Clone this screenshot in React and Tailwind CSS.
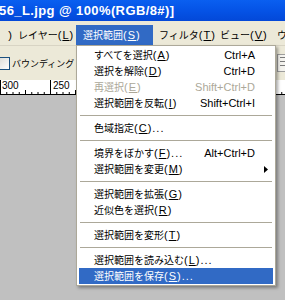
const jp = "font-['Noto_Sans_CJK_JP','Noto_Sans_CJK_SC',sans-serif]"
const lat = "font-['Liberation_Sans','Noto_Sans_CJK_JP',sans-serif]"

/* ---------------- Data ---------------- */
const rows = [
  { t: "すべてを選択", k: "A", sc: "Ctrl+A" },
  { t: "選択を解除", k: "D", sc: "Ctrl+D" },
  { t: "再選択", k: "E", sc: "Shift+Ctrl+D", off: true },
  { t: "選択範囲を反転", k: "I", sc: "Shift+Ctrl+I" },
  "sep",
  { t: "色域指定", k: "C", dots: true },
  "sep",
  { t: "境界をぼかす", k: "F", dots: true, sc: "Alt+Ctrl+D" },
  { t: "選択範囲を変更", k: "M", sub: true },
  "sep",
  { t: "選択範囲を拡張", k: "G" },
  { t: "近似色を選択", k: "R" },
  "sep",
  { t: "選択範囲を変形", k: "T" },
  "sep",
  { t: "選択範囲を読み込む", k: "L", dots: true },
  { t: "選択範囲を保存", k: "S", dots: true, on: true },
]

function Label({ t, k, dots }) {
  return (
    <span className="flex items-baseline whitespace-nowrap leading-none">
      <span className={jp + " text-[10px] leading-none"}>{t}</span>
      <span className={lat + " text-[11px] leading-none tracking-[1px]"}>
        (<span className="underline underline-offset-[1px]">{k}</span>)
        {dots ? "..." : ""}
      </span>
    </span>
  )
}

/* ---------------- Ruler ---------------- */
function Ruler() {
  const ticks = []
  for (let i = 0; i <= 48; i++) {
    const x = i * 6.25 + 0.5
    const h = i % 8 === 0 ? 15 : i % 4 === 0 ? 5 : 3
    ticks.push(<line key={i} x1={x} x2={x} y1={15 - h} y2={15} stroke="#000" strokeWidth="1" />)
  }
  return (
    <svg width="285" height="15" className="block shrink-0">
      <rect width="285" height="15" fill="#fff" />
      {ticks}
      <line x1="0" x2="285" y1="14.5" y2="14.5" stroke="#000" />
      <text x="2" y="9" fontSize="10" fontFamily="Liberation Sans" fill="#000">300</text>
      <text x="53" y="9" fontSize="10" fontFamily="Liberation Sans" fill="#000">250</text>
    </svg>
  )
}

/* ---------------- App ---------------- */
export default function App() {
  return (
    <div className="relative w-[285px] h-[300px] overflow-hidden bg-[#c0c0c0] flex flex-col">
      {/* Title bar */}
      <div className="h-[21px] shrink-0 bg-gradient-to-b from-[#0a5ff0] via-[#0553e6] to-[#0348d8] flex items-center">
        <span className={lat + " text-white font-bold text-[13px] leading-none tracking-[0.4px] whitespace-nowrap -ml-[1px]"}>
          56_L.jpg @ 100%(RGB/8#)]
        </span>
      </div>

      {/* Menu bar */}
      <div className="h-[24px] shrink-0 bg-[#ece9d8] flex items-end text-black overflow-hidden">
        <div className="w-[12px] shrink-0 h-[20px] flex items-center justify-end overflow-hidden">
          <span className={lat + " text-[11px] leading-none"}>)</span>
        </div>
        <div className="w-[64px] shrink-0 h-[20px] flex items-center pl-[6px]">
          <Label t="レイヤー" k="L" />
        </div>
        <div className="w-[77px] shrink-0 h-[20px] flex items-center pl-[7px] bg-[#316ac5] text-white">
          <Label t="選択範囲" k="S" />
        </div>
        <div className="w-[61px] shrink-0 h-[20px] flex items-center pl-[6px]">
          <Label t="フィルタ" k="T" />
        </div>
        <div className="w-[57px] shrink-0 h-[20px] flex items-center pl-[6px]">
          <Label t="ビュー" k="V" />
        </div>
        <div className="shrink-0 h-[20px] flex items-center pl-[6px]">
          <span className={jp + " text-[10px] leading-none whitespace-nowrap"}>ウ</span>
        </div>
      </div>

      {/* Tool options bar */}
      <div className="h-[35px] shrink-0 bg-[#ece9d8] border-t border-[#d8d4c4] flex items-center overflow-hidden">
        <div className="w-[13px] h-[13px] shrink-0 -ml-[3px] border border-[#1c5180] bg-gradient-to-br from-[#dcdcd7] to-white" />
        <span className={jp + " text-[9px] leading-none ml-[2px] whitespace-nowrap"}>バウンディング</span>
        <div className="ml-auto -mr-[6px] shrink-0 w-[14px] h-[18px] border border-[#9d9d9d] bg-[#f4f3ee] flex flex-col gap-[3px] p-[2px]">
          <div className="h-[1px] bg-[#7a7a7a]" />
          <div className="h-[1px] bg-[#7a7a7a]" />
          <div className="h-[1px] bg-[#7a7a7a]" />
        </div>
      </div>

      {/* Ruler */}
      <Ruler />

      {/* Canvas area */}
      <div className="flex-1 bg-[#c0c0c0]" />

      {/* Dropdown (overlay) */}
      <div className="absolute left-[76px] top-[45px] w-[200px] bg-white border border-[#aca899] py-[1px] px-[2px] shadow-[2px_2px_3px_rgba(0,0,0,0.35)]">
        {rows.map((r, i) =>
          r === "sep" ? (
            <div key={i} className="h-[9px] flex items-center px-[1px]">
              <div className="h-[1px] w-full bg-[#aca899]" />
            </div>
          ) : (
            <div
              key={i}
              className={
                "h-[16px] flex items-center pl-[15px] pr-[18px] " +
                (r.on ? "bg-[#316ac5] text-white" : r.off ? "text-[#aca899]" : "text-black")
              }
            >
              <Label t={r.t} k={r.k} dots={r.dots} />
              <span className={lat + " ml-auto text-[11px] leading-none whitespace-nowrap"}>{r.sc}</span>
              {r.sub && (
                <svg width="4" height="7" className="-mr-[13px] ml-auto">
                  <path d="M0 0 L4 3.5 L0 7 Z" fill="#000" />
                </svg>
              )}
            </div>
          )
        )}
      </div>
    </div>
  )
}
